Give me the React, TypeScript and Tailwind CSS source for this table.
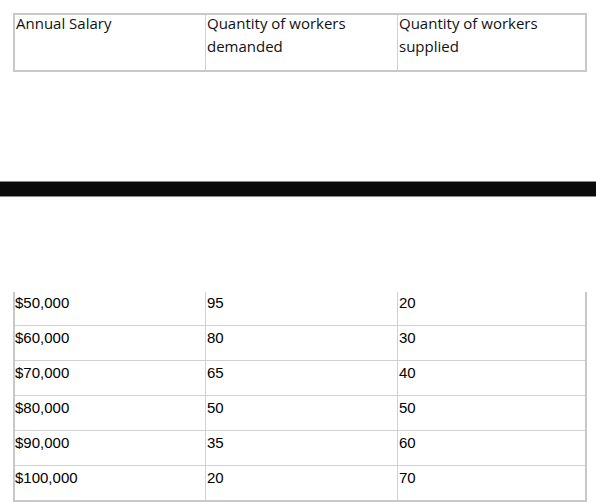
const rows = [
  ["$50,000", "95", "20"],
  ["$60,000", "80", "30"],
  ["$70,000", "65", "40"],
  ["$80,000", "50", "50"],
  ["$90,000", "35", "60"],
  ["$100,000", "20", "70"],
];

const App = () => {
  return (
    <div className="w-[596px] h-[503px] bg-white overflow-hidden">
      {/* header table */}
      <div className="pt-[13px] pl-[13px]">
        <div className="w-[574px] h-[59px] grid grid-cols-[190px_192px_1fr] border-2 border-[#c8c8c8] font-['Open_Sans',sans-serif] text-[15px] leading-[23px] text-[#111]">
          <div className="pl-[1px] -mt-[3px]">Annual Salary</div>
          <div className="border-l border-[#d0d0d0] pl-[1px]">
            <div className="-mt-[3px]">
              Quantity of workers
              <br />
              demanded
            </div>
          </div>
          <div className="border-l border-[#d0d0d0] pl-[1px]">
            <div className="-mt-[3px]">
              Quantity of workers
              <br />
              supplied
            </div>
          </div>
        </div>
      </div>

      <div className="h-[109px]" />
      <div className="h-[16px] bg-[#0b0b0b] border-y border-[#8a8a8a]" />
      <div className="h-[95px]" />

      {/* data rows */}
      <div className="pl-[13px] font-['Liberation_Sans',Arial,sans-serif] text-[15px] text-black">
        <div className="w-[574px] border-x-2 border-b-2 border-[#c8c8c8]">
          {rows.map((r, i) => (
            <div
              key={r[0]}
              className={
                "grid grid-cols-[190px_192px_1fr] " +
                (i === 0 ? "h-[33px]" : "h-[35px] border-t border-[#d0d0d0]")
              }
            >
              <div className={i === 0 ? "" : "pt-[1px]"}>{r[0]}</div>
              <div className={"border-l border-[#d0d0d0] pl-[1px] " + (i === 0 ? "" : "pt-[1px]")}>{r[1]}</div>
              <div className={"border-l border-[#d0d0d0] pl-[1px] " + (i === 0 ? "" : "pt-[1px]")}>{r[2]}</div>
            </div>
          ))}
        </div>
      </div>
    </div>
  );
};

export default App;
